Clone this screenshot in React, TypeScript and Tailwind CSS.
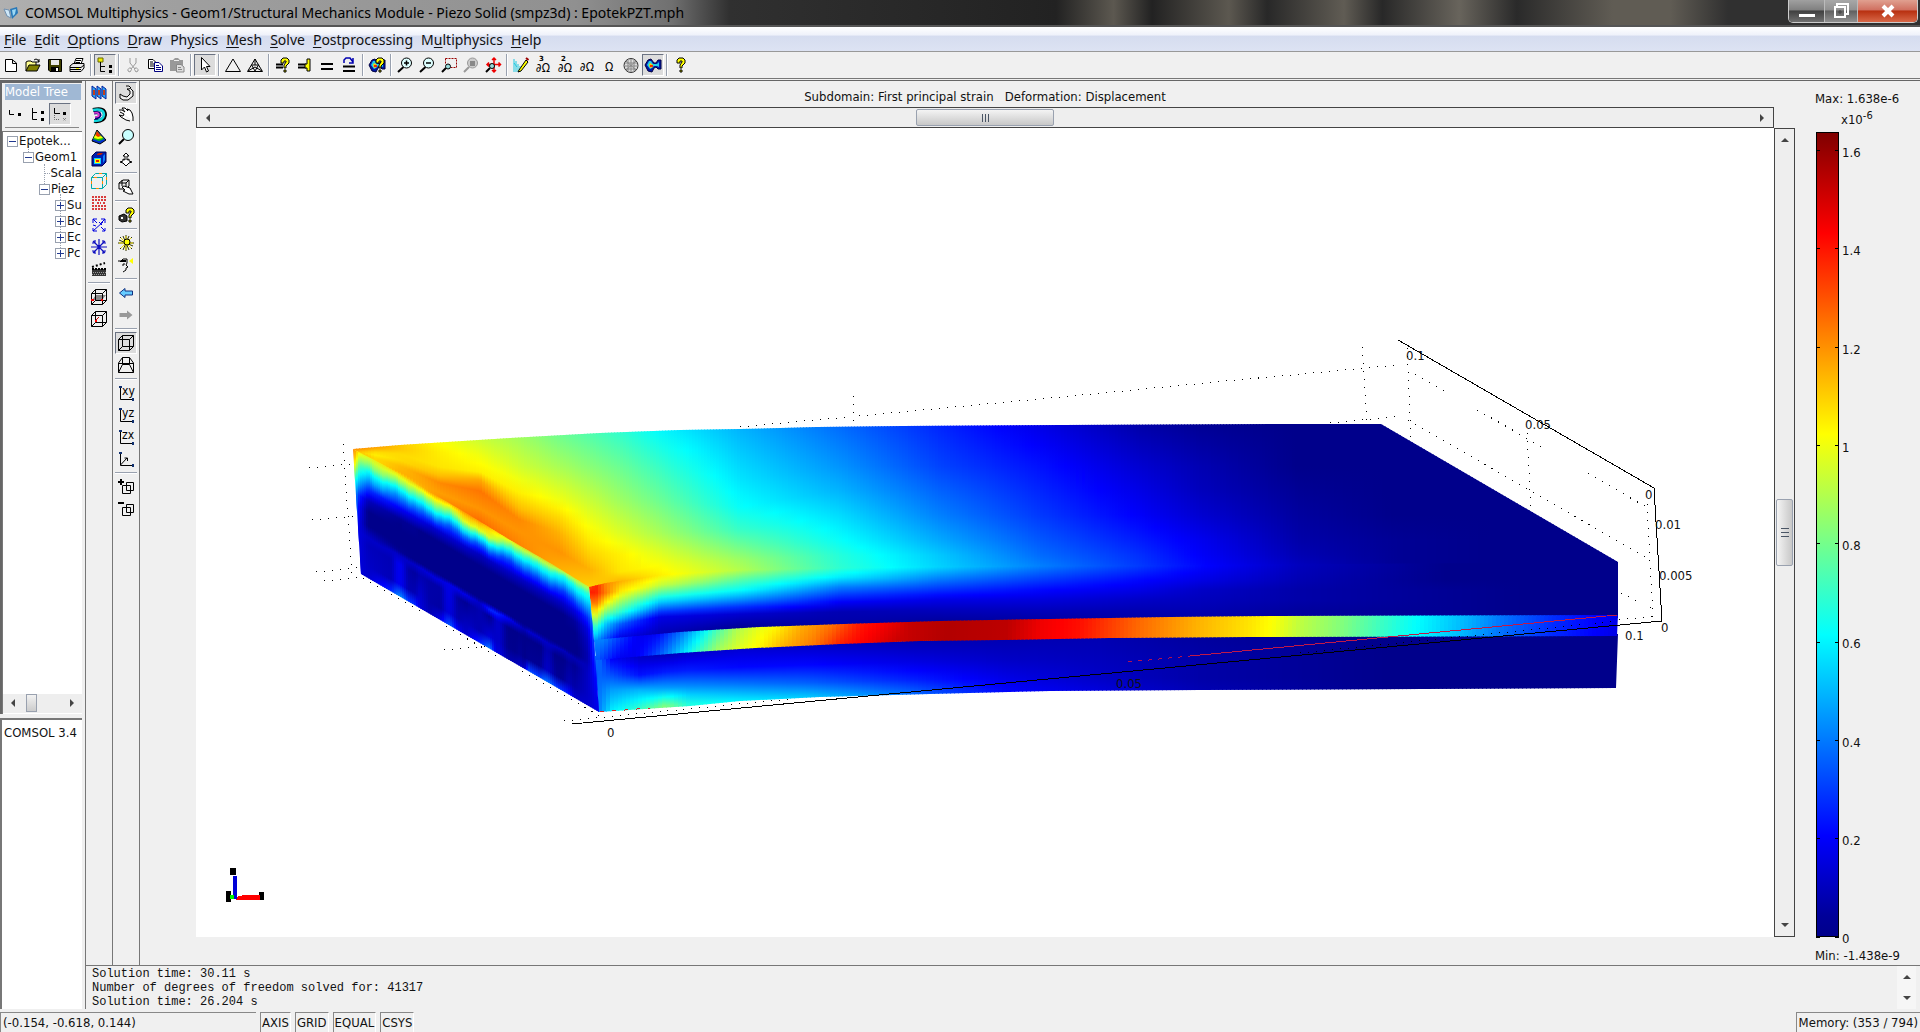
import React from 'react';

type Stop = [number, number];
type Column = { x: number; stops: Stop[] };

const clamp = (v: number) => Math.max(0, Math.min(1, v));

// jet colour map, t in 0..1
const jet = (t: number) => {
    const v = clamp(t);
    const ch = (c: number) => Math.round(255 * clamp(1.5 - Math.abs(4 * v - c)));
    return `rgb(${ch(3)},${ch(2)},${Math.max(ch(1), v < 0.1 ? 139 : 0)})`;
};

const lerp = (a: number, b: number, k: number) => a + (b - a) * k;

const sample = (points: Stop[], x: number) => {
    if (x <= points[0][0]) return points[0][1];
    for (let i = 1; i < points.length; i++) {
        if (x <= points[i][0]) return lerp(points[i - 1][1], points[i][1], (x - points[i - 1][0]) / (points[i][0] - points[i - 1][0]));
    }
    return points[points.length - 1][1];
};

const topFace: Column[] = [
    { x: 353, stops: [[448, .74], [449, .74], [450, .72], [451, .7], [452, .7], [453, .68], [454, .66]] },
    { x: 375, stops: [[446, .73], [449, .7], [452, .66], [455, .64], [458, .66], [461, .66], [464, .6]] },
    { x: 400, stops: [[444, .68], [449, .68], [454, .66], [460, .66], [466, .69], [472, .7], [478, .62]] },
    { x: 440, stops: [[441, .62], [452, .64], [467, .65], [476, .69], [483, .74], [493, .72], [501, .74]] },
    { x: 480, stops: [[438, .57], [455, .61], [472, .64], [480, .71], [491, .76], [509, .73], [525, .78]] },
    { x: 520, stops: [[435, .53], [467, .58], [493, .64], [509, .69], [520, .74], [532, .73], [549, .75]] },
    { x: 560, stops: [[433, .48], [467, .54], [500, .61], [517, .66], [533, .7], [552, .73], [571, .7]] },
    { x: 590, stops: [[431, .45], [467, .51], [500, .57], [527, .62], [550, .66], [570, .7], [588, .67]] },
    { x: 620, stops: [[430, .42], [467, .48], [500, .53], [533, .59], [555, .64], [572, .65], [582, .7]] },
    { x: 660, stops: [[429, .37], [467, .43], [500, .48], [533, .54], [552, .59], [565, .62], [575, .64]] },
    { x: 740, stops: [[428, .3], [480, .35], [507, .38], [530, .43], [545, .48], [560, .53], [570, .55]] },
    { x: 840, stops: [[426, .23], [466, .27], [490, .3], [515, .34], [540, .38], [555, .41], [568, .42]] },
    { x: 940, stops: [[425, .16], [466, .19], [490, .22], [515, .25], [540, .29], [555, .32], [567, .33]] },
    { x: 1040, stops: [[424, .1], [466, .14], [490, .16], [515, .18], [540, .21], [555, .23], [566, .25]] },
    { x: 1140, stops: [[424, .04], [466, .08], [490, .1], [515, .12], [540, .15], [555, .17], [566, .18]] },
    { x: 1200, stops: [[424, .02], [466, .05], [490, .06], [515, .08], [540, .11], [555, .12], [566, .13]] },
    { x: 1300, stops: [[424, .01], [466, .01], [490, .02], [515, .03], [540, .04], [555, .05], [565, .06]] },
    { x: 1400, stops: [[424, 0], [466, 0], [490, .01], [515, .01], [540, .02], [555, .02], [565, .02]] },
    { x: 1618, stops: [[424, 0], [466, 0], [490, 0], [515, 0], [540, 0], [555, 0], [563, 0]] },
];

const upperFront: Column[] = [
    { x: 589, stops: [[586, .8], [592, .85], [600, .78], [612, .62], [624, .45], [640, .3]] },
    { x: 596, stops: [[586, .84], [593, .84], [604, .75], [616, .58], [627, .42], [640, .27]] },
    { x: 606, stops: [[583, .74], [593, .75], [602, .64], [612, .5], [624, .32], [639, .2]] },
    { x: 620, stops: [[582, .7], [591, .65], [601, .54], [612, .42], [624, .22], [638, .1]] },
    { x: 660, stops: [[575, .64], [585, .57], [597, .4], [607, .25], [617, .1], [635, .05]] },
    { x: 740, stops: [[570, .55], [580, .46], [590, .38], [600, .26], [614, .08], [628, .02]] },
    { x: 840, stops: [[568, .42], [577, .36], [587, .25], [602, .12], [612, .05], [624, .04]] },
    { x: 940, stops: [[567, .33], [580, .24], [590, .17], [600, .1], [610, .06], [621, .03]] },
    { x: 1040, stops: [[566, .25], [580, .18], [590, .13], [600, .09], [610, .06], [619, .04]] },
    { x: 1140, stops: [[566, .18], [580, .13], [590, .1], [600, .07], [610, .05], [618, .04]] },
    { x: 1200, stops: [[566, .13], [580, .1], [590, .07], [600, .06], [610, .05], [617, .04]] },
    { x: 1300, stops: [[565, .06], [580, .05], [590, .04], [600, .04], [610, .03], [616, .03]] },
    { x: 1450, stops: [[564, .01], [580, .01], [590, .02], [600, .02], [610, .02], [616, .02]] },
    { x: 1619, stops: [[562, 0], [580, 0], [590, 0], [600, 0], [610, 0], [615, 0]] },
];

const lowerFront: Column[] = [
    { x: 590, stops: [[659, .24], [675, .2], [690, .16], [712, .12]] },
    { x: 600, stops: [[659, .22], [675, .22], [690, .24], [712, .26]] },
    { x: 612, stops: [[659, .12], [675, .2], [690, .28], [711, .36]] },
    { x: 640, stops: [[657, .07], [675, .14], [690, .3], [709, .43]] },
    { x: 665, stops: [[655, .06], [672, .15], [688, .28], [706, .5]] },
    { x: 690, stops: [[652, .07], [670, .15], [686, .26], [704, .4]] },
    { x: 740, stops: [[648, .08], [667, .13], [684, .24], [702, .37]] },
    { x: 806, stops: [[645, .07], [665, .13], [683, .22], [698, .33]] },
    { x: 906, stops: [[641, .05], [662, .1], [680, .16], [695, .24]] },
    { x: 1006, stops: [[640, .05], [660, .07], [678, .1], [693, .13]] },
    { x: 1100, stops: [[638, .05], [660, .06], [678, .07], [691, .09]] },
    { x: 1200, stops: [[637, .03], [660, .04], [678, .04], [690, .05]] },
    { x: 1400, stops: [[637, .01], [660, .01], [678, .01], [689, .01]] },
    { x: 1618, stops: [[636, 0], [660, 0], [678, 0], [688, 0]] },
];

const bandTop: Stop[] = [[594, 640], [650, 634], [680, 632], [760, 627], [844, 624], [940, 621], [1050, 619], [1170, 617], [1280, 616], [1618, 615]];
const bandBottom: Stop[] = [[594, 660], [680, 653], [755, 648], [840, 644], [920, 641], [1000, 640], [1110, 638], [1250, 637], [1618, 636]];
const bandValue: Stop[] = [
    [594, .26], [612, .18], [628, .11], [646, .11], [670, .22], [693, .35], [704, .42], [727, .54], [750, .6], [767, .63], [790, .7],
    [823, .76], [850, .85], [873, .88], [907, .93], [947, .95], [1007, .94], [1040, .89], [1080, .86], [1107, .82], [1140, .77],
    [1197, .7], [1250, .65], [1273, .62], [1300, .56], [1343, .5], [1383, .43], [1413, .38], [1467, .3], [1500, .24], [1550, .17], [1600, .12], [1618, .1],
];
const band: Column[] = Array.from({ length: 172 }, (_, i) => {
    const x = 592 + i * 6;
    const shift = x < 900 ? 9 : 2;
    return { x, stops: [[sample(bandTop, x) - 1, sample(bandValue, x - shift)], [sample(bandBottom, x) + 1, sample(bandValue, x + shift)]] as Stop[] };
});

// depth profile of the left face, measured down from its upper edge
const sideProfile: { x: number; values: number[] }[] = [
    { x: 353, values: [.76, .74, .68, .55, .42, .36, .32, .3, .26, .22, .2, .2, .2] },
    { x: 359, values: [.68, .55, .46, .38, .28, .16, .12, .1, .09, .09, .09, .09, .09] },
    { x: 368, values: [.64, .5, .38, .29, .17, .06, .01, .01, .05, .07, .06, .07, .08] },
    { x: 400, values: [.68, .52, .38, .26, .12, .02, 0, 0, .02, .07, .05, .05, .3] },
    { x: 415, values: [.7, .5, .37, .24, .1, .02, 0, 0, .01, .07, .03, .05, .26] },
    { x: 420, values: [.72, .5, .37, .24, .1, .01, 0, 0, .01, .08, .05, .08, .1] },
    { x: 430, values: [.76, .5, .37, .22, .08, .01, 0, 0, .01, .09, .04, .04, .06] },
    { x: 450, values: [.74, .52, .37, .22, .08, .01, 0, 0, 0, .1, .04, .03, .24] },
    { x: 466, values: [.76, .6, .42, .24, .08, .01, 0, 0, 0, .1, .02, .06, .08] },
    { x: 480, values: [.76, .6, .38, .2, .06, .01, 0, 0, 0, .07, .05, .05, .24] },
    { x: 490, values: [.72, .58, .38, .22, .07, .01, 0, 0, 0, .16, .02, .09, .36] },
    { x: 496, values: [.7, .55, .36, .2, .07, .01, 0, 0, 0, .16, .02, .02, .05] },
    { x: 525, values: [.7, .42, .3, .18, .07, .01, 0, 0, 0, .05, 0, .01, .1] },
    { x: 528, values: [.7, .42, .3, .18, .07, .01, 0, 0, 0, .08, 0, .02, .34] },
    { x: 562, values: [.7, .4, .3, .18, .07, .01, 0, 0, 0, .06, 0, .02, .3] },
    { x: 575, values: [.68, .4, .31, .2, .1, .03, .01, 0, 0, .05, .02, .04, .1] },
    { x: 588, values: [.68, .42, .35, .27, .17, .1, .07, .05, .05, .06, .07, .07, .08] },
    { x: 600, values: [.6, .45, .42, .38, .36, .34, .3, .26, .22, .2, .16, .12, .1] },
];
const sideDepth = [-4, 7, 14, 22, 32, 43, 54, 68, 75, 80, 88, 108, 128];
const sideFace: Column[] = Array.from({ length: 125 }, (_, i) => {
    const x = 352 + i * 2;
    const edge = 449 + (x - 353) * 0.583;
    const ragged = Math.sin(x * 0.17) * Math.sin(x * 0.053) + Math.sin(x * 0.71) * 0.3;
    const streak = Math.max(0, Math.sin(x * 0.19 + 1) * Math.sin(x * 0.067));
    return {
        x,
        stops: sideDepth.map((depth, row) => {
            const base = sample(sideProfile.map((p) => [p.x, p.values[row]] as Stop), x);
            const jitter = row > 0 && row < 4 ? ragged * 2 : row === 9 ? ragged : 0;
            const extra = row > 9 && x < 580 ? streak * 0.06 : 0;
            return [edge + depth + jitter, base + extra] as Stop;
        }),
    };
});

interface FaceProps {
    id: string;
    columns: Column[];
    outline: string;
    step: number;
}

const Face: React.FC<FaceProps> = ({ id, columns, outline, step }) => {
    const strips: { x: number; y1: number; y2: number; stops: Stop[] }[] = [];
    const last = columns[columns.length - 1].x;
    let k = 0;
    for (let x = columns[0].x; x < last; x += step) {
        const mid = x + step / 2;
        while (k < columns.length - 2 && columns[k + 1].x < mid) k++;
        const a = columns[k];
        const b = columns[k + 1];
        const f = clamp((mid - a.x) / (b.x - a.x));
        const rows = a.stops.map((s, i) => [lerp(s[0], b.stops[i][0], f), lerp(s[1], b.stops[i][1], f)] as Stop);
        const y1 = rows[0][0];
        const y2 = rows[rows.length - 1][0];
        const stops: Stop[] = [];
        rows.forEach((r, i) => {
            stops.push([(r[0] - y1) / (y2 - y1), r[1]]);
            const n = rows[i + 1];
            if (n && Math.abs(n[1] - r[1]) > 0.02) stops.push([((r[0] + n[0]) / 2 - y1) / (y2 - y1), (r[1] + n[1]) / 2]);
        });
        strips.push({ x, y1, y2, stops });
    }

    return (
        <g clipPath={`url(#${id}-clip)`}>
            <clipPath id={`${id}-clip`}><polygon points={outline} /></clipPath>
            {strips.map((s, i) => (
                <g key={i}>
                    <linearGradient id={`${id}-${i}`} gradientUnits="userSpaceOnUse" x1={s.x} x2={s.x} y1={s.y1} y2={s.y2}>
                        {s.stops.map((st, j) => <stop key={j} offset={st[0]} stopColor={jet(st[1])} />)}
                    </linearGradient>
                    <rect x={s.x} y={s.y1 - 6} width={step + 1} height={s.y2 - s.y1 + 12} fill={`url(#${id}-${i})`} />
                </g>
            ))}
        </g>
    );
};

const backEdge = '353,449 400,445 510,438 600,433 680,430 740,429 817,427 903,426 1062,425 1280,424 1381,424';

const axisLabels = [
    { x: 1406, y: 360, text: '0.1' },
    { x: 1525, y: 429, text: '0.05' },
    { x: 1645, y: 499, text: '0' },
    { x: 1655, y: 529, text: '0.01' },
    { x: 1659, y: 580, text: '0.005' },
    { x: 1661, y: 632, text: '0' },
    { x: 1625, y: 640, text: '0.1' },
    { x: 1116, y: 688, text: '0.05' },
    { x: 607, y: 737, text: '0' },
];

const SurfacePlot: React.FC = () => (
    <svg viewBox="196 128 1578 809" className="block w-full h-full bg-white" role="img" aria-label="First principal strain">
        <g stroke="#000" strokeWidth="1" strokeDasharray="1 7" fill="none" shapeRendering="crispEdges">
            <path d="M740 427L1030 400L1205 383L1398 365" />
            <path d="M853 396L854 424" />
            <path d="M1362 347L1367 420" />
            <path d="M1407 348L1411 440" />
            <path d="M1415 374L1648 508" />
            <path d="M1330 423L1402 416L1418 426L1650 560" />
            <path d="M1527 433L1531 510" />
            <path d="M1647 504L1653 617" />
            <path d="M1621 593L1653 609" />
            <path d="M1619 620L1653 616" />
            <path d="M343 444L352 574" />
            <path d="M309 468L350 464" />
            <path d="M312 520L356 516" />
            <path d="M316 572L360 567" />
            <path d="M324 581L361 577L600 716" />
            <path d="M444 650L490 646" />
            <path d="M564 721L790 699" />
        </g>
        <Face id="top" columns={topFace} step={3} outline={`${backEdge} 1618,562 1618,567 1040,567 740,571 660,576 620,583 590,588`} />
        <Face id="front" columns={upperFront} step={3} outline="589,587 606,583 620,581 660,575 740,570 840,567 1040,566 1618,562 1618,618 1050,621 760,629 594,642" />
        <Face id="lower" columns={lowerFront} step={4} outline="594,656 755,646 1000,638 1618,634 1616,688 1200,690 1050,691 930,694 820,697 740,701 690,706 599,712" />
        <Face id="band" columns={band} step={4} outline="594,640 680,632 760,627 844,624 940,621 1050,619 1170,617 1280,616 1618,615 1617,636 1250,637 1110,638 1000,640 920,641 840,644 755,648 680,653 596,660" />
        <Face id="side" columns={sideFace} step={2} outline="353,449 380,463 420,486 466,513 510,540 550,563 589,587 594,640 599,712 361,574" />
        <g fill="none" shapeRendering="crispEdges">
            <path d="M1398 340L1654 488L1662 621L572 724" stroke="#000" />
            <path d="M1128 662L1190 656" stroke="#b01050" strokeDasharray="4 6" />
            <path d="M1190 656L1617 615" stroke="#c01848" />
            <path d="M1300 653L1617 621" stroke="#000" strokeDasharray="1 7" />
            <path d="M600 712L650 708" stroke="#e02020" strokeDasharray="4 8" />
        </g>
        <g fontSize="13" fill="#111" className="font-['DejaVu_Sans_Condensed','DejaVu_Sans',sans-serif]">
            {axisLabels.map((l, i) => <text key={i} x={l.x} y={l.y}>{l.text}</text>)}
        </g>
        <g shapeRendering="crispEdges">
            <rect x="226" y="891" width="5" height="11" fill="#000" />
            <rect x="230" y="868" width="6" height="7" fill="#000" />
            <rect x="259" y="892" width="5" height="8" fill="#000" />
            <path d="M236 897L244 895H260V900H236Z" fill="#f00" />
            <rect x="233" y="876" width="4" height="23" fill="#0000d8" />
            <rect x="230" y="895" width="4" height="4" fill="#00f000" />
        </g>
    </svg>
);

const magnifier = (
    <>
        <path d="M6.500 10L1 15" stroke="#000" strokeWidth="2" />
        <circle cx="9.500" cy="6" r="5" fill="#dff" stroke="#000" />
    </>
);
const cube = <path d="M.5 4.500H11.500V15.500H.5ZM4.500 .5H15.500V11.500H4.500ZM.5 4.500L4.500 .5M11.500 4.500L15.500 .5M.5 15.500L4.500 11.500M11.500 15.500L15.500 11.500" stroke="#000" fill="none" />;
const colourBlob = (
    <>
        <path d="M0 8L3 3L6 2L9 6L11 6L13 3H16V12H13L11 10L9 11L7 15L3 14Z" fill="#0018a8" stroke="#000040" />
        <path d="M2 8L4 4L6 4L8 7H12L14 5V10L12 9H9L7 11L5 12Z" fill="#20d0e8" />
        <path d="M4 8L5 6L8 8L8 10L5 11Z" fill="#ffd000" />
        <path d="M5 8H8V10H5Z" fill="#f03000" />
    </>
);
const question = (x: number) => (
    <g transform={`translate(${x} 0)`}>
        <path d="M1 5V3L3 1H7L9 3V6L6 9V11H4V8L6 5V4H4V6H1Z" fill="#ff0" stroke="#000" />
        <path d="M4 13H6V15H4Z" fill="#ff0" stroke="#000" />
    </g>
);
const axes = (label: string) => (
    <>
        <path d="M2.500 1V14.500H16" stroke="#000" fill="none" />
        <path d="M1 1H4V3H1ZM14 13H16V16H14Z" fill="#103070" />
        {label && <text x="4" y="10" fontSize="12" className="font-['DejaVu_Sans_Condensed','DejaVu_Sans',sans-serif]">{label}</text>}
    </>
);
const omega = (label: string, sup?: string) => (
    <>
        <text x="8" y={sup ? 15 : 14} textAnchor="middle" fontSize="12" className="font-['DejaVu_Sans_Condensed','DejaVu_Sans',sans-serif]">{label}</text>
        {sup && <text x="4" y="4" fontSize="7" fontWeight="bold" className="font-['DejaVu_Sans',sans-serif]">{sup}</text>}
    </>
);

const icons: Record<string, React.ReactNode> = {
    new: <path d="M2.500 2.500H9L13.500 6V14.500H2.500ZM9.500 2.500V6.500H13.500" fill="#fff" stroke="#000" />,
    open: (
        <>
            <path d="M1 14V5L3 4H6L7 5H11V8" fill="#ffff90" stroke="#000" />
            <path d="M1 14L4 8H15L12 14Z" fill="#808000" stroke="#000" />
            <path d="M9 3L11 2L13 3L14 5M14 2V5H11" stroke="#000" fill="none" />
        </>
    ),
    save: (
        <>
            <path d="M1.500 2.500H14.500V14.500H3L1.500 13Z" fill="#404000" stroke="#000" />
            <path d="M4 3H12V8H4Z" fill="#e8e8e8" />
            <path d="M4 10H12V14H4Z" fill="#000" />
            <path d="M9 11H11V14H9Z" fill="#fff" />
        </>
    ),
    print: (
        <>
            <path d="M5 7L7 1.500H14L12 7Z" fill="#fff" stroke="#000" />
            <path d="M7 3.500H12M6.500 5.500H11" stroke="#000" />
            <path d="M1 9L4 6.500H15V11L12 14.500H1Z" fill="#e8e8e8" stroke="#000" />
            <path d="M1 10.500H12L15 8M1 12.500H12" stroke="#000" fill="none" />
            <path d="M7 11H10V12H7Z" fill="#ff0" />
        </>
    ),
    tree: (
        <>
            <path d="M1 1H6V5H1Z" fill="#ee0" stroke="#660" />
            <path d="M3.500 5V14.500H8M3.500 9.500H8" stroke="#000" fill="none" />
            <path d="M12 8H15V11H12ZM12 13H15V16H12Z" />
        </>
    ),
    cut: <path d="M5 1V6L10 12M11 1V6L6 12M3 12.500L5 10.500L6.500 12.500L5 15L3 14ZM13 12.500L11 10.500L9.500 12.500L11 15L13 14Z" stroke="#999" fill="none" />,
    copy: (
        <>
            <path d="M1.500 2.500H6L8.500 5V11.500H1.500Z" fill="#fff" stroke="#000" />
            <path d="M3 5H6M3 7H7M3 9H7" stroke="#000" />
            <path d="M7.500 5.500H12L15.500 9V14.500H7.500Z" fill="#fff" stroke="#000080" />
            <path d="M9 8.500H12M9 10.500H14M9 12.500H14" stroke="#000080" />
        </>
    ),
    paste: (
        <>
            <path d="M1 3H4L6 1H9L11 3H14V14H1Z" fill="#999" />
            <path d="M5 3.500H10" stroke="#eee" />
            <path d="M7.500 7.500H12L15 10V15H7.500Z" fill="#ddd" stroke="#888" />
            <path d="M9 10.500H12M9 12.500H13" stroke="#888" />
        </>
    ),
    cursor: <path d="M4.500 .5V13L7.500 10L9.500 15L11.500 14L9.500 9.500H13Z" fill="#fff" stroke="#000" />,
    triangle: <path d="M8 2L15.500 14.500H.5Z" fill="none" stroke="#000" />,
    mesh: <path d="M8 2L15.500 14.500H.5ZM4.500 8H11.500L8 14ZM8 2V8M1 14L8 10L15 14" fill="none" stroke="#000" />,
    solveQuestion: <><path d="M1 7.500H8M1 10.500H8" stroke="#000" strokeWidth="2" />{question(5)}</>,
    solveRestart: <><path d="M1 7.500H9M1 10.500H9" stroke="#000" strokeWidth="2" /><path d="M10 2H13V14H10V11H8V7H10Z" fill="#ff0" stroke="#000" /></>,
    equal: <path d="M2 7H14M2 12H14" stroke="#000" strokeWidth="2" />,
    refresh: <><path d="M2 9.500H14M2 14H14" stroke="#000" strokeWidth="2" /><path d="M3 6V3L5 1H9L12 5M12 1V6H8" stroke="#0000b0" fill="none" strokeWidth="1.500" /></>,
    plotQuestion: <>{colourBlob}{question(6)}</>,
    zoomIn: <>{magnifier}<path d="M7 6H12M9.500 3.500V8.500" stroke="#000" strokeWidth="1.500" /></>,
    zoomOut: <>{magnifier}<path d="M7 6H12" stroke="#000" strokeWidth="1.500" /></>,
    zoomWindow: <><path d="M4.500 1.500H15.500V10.500H9M4.500 1.500V7" fill="none" stroke="#900" strokeDasharray="2 1" /><path d="M5 11L1 15" stroke="#000" strokeWidth="2" /><circle cx="7" cy="9.500" r="2.500" fill="#9dd" stroke="#000" /></>,
    zoomLast: <><path d="M6 10L1 15" stroke="#999" strokeWidth="2" /><circle cx="9.500" cy="6" r="5" fill="#ccc" stroke="#999" /><path d="M7 4H12V9H7Z" fill="#888" /></>,
    zoomExtents: <><path d="M9 1V15M2 7.500H15.500M7 3L9 1L11 3M7 13L9 15L11 13M13.500 5.500L15.500 7.500L13.500 9.500M4 5.500L2 7.500L4 9.500" stroke="#e00" fill="none" strokeWidth="1.500" /><path d="M5 11L1 15" stroke="#000" strokeWidth="2" /><circle cx="7" cy="9" r="2.500" fill="#9dd" stroke="#000" /></>,
    brush: <><path d="M1 2V15M3 4V15M5 7V15M7 9V15M1 6L4 10" stroke="#20c8e0" /><path d="M6 13L13 3L15 5L8 14L5 15Z" fill="#ff0" stroke="#000" /><path d="M13 1L15.500 3" stroke="#900" strokeWidth="2" /></>,
    omega3: omega('∂Ω', '3'),
    omega2: omega('∂Ω', '2'),
    omega1: omega('∂Ω'),
    omega: omega('Ω'),
    sphere: <><circle cx="8" cy="8.500" r="7" fill="#ddd" stroke="#333" /><path d="M2 6H14M2 9H15M3 12H13M5 3V14M8 2V15M11 3V14M3 4L13 13M13 4L3 13" stroke="#888" /></>,
    plot: colourBlob,
    help: question(3),
    slice: <><path d="M1 1L5 4V14L1 11ZM6 1L10 4V14L6 11ZM11 1L15 4V14L11 11Z" fill="#30a0f0" stroke="#0020a0" /><path d="M2 5H4V10H2ZM7 5H9V10H7ZM12 5H14V10H12Z" fill="#c04020" /></>,
    iso: <><path d="M2 3Q14 0 14 8Q13 15 3 14" fill="none" stroke="#000" strokeWidth="4" /><path d="M2 3Q13 1 13 8Q12 14 3 14" fill="none" stroke="#10d8e0" strokeWidth="2.500" /><path d="M3 6Q9 5 9 8Q8 11 4 11" fill="none" stroke="#000080" strokeWidth="3" /><path d="M3 6Q8 5 8 8Q8 10 4 10" fill="none" stroke="#f040d0" strokeWidth="1.500" /></>,
    pyramid: <><path d="M1 12L6 1L15 11L9 15Z" fill="#0030d0" stroke="#000" /><path d="M2 10L6 2L13 10L8 12Z" fill="#10c010" /><path d="M4 7L6 2L10 7L7 8Z" fill="#f03000" /><path d="M3 9L4 6L7 8L10 7L12 9L7 10Z" fill="#ff0" /></>,
    box: <><path d="M1 5L5 1H15V11L11 15H1Z" fill="#0020b0" stroke="#000050" /><path d="M3 7H10V13H3Z" fill="#10d0ff" /><path d="M4 8H9V12H4Z" fill="#ff0" /><path d="M5 9H8V11H5Z" fill="#e02000" /><path d="M6 3L8 2H12L10 4H6Z" fill="#c02000" /><path d="M12 5L14 3V9L12 12Z" fill="#1080ff" /></>,
    edgeBox: <><path d="M.5 4.500H11.500V15.500H.5ZM4.500 .5H15.500V11.500M4.500 .5L.5 4.500M11.500 4.500L15.500 .5M11.500 15.500L15.500 11.500" fill="none" stroke="#0aa" /><path d="M3 4.500H6M8 .5H11M11.500 8V11M.5 8V11M5 15.500H8M15.500 4V7" stroke="#f80" /></>,
    points: <path d="M1 2H15M1 14H15M1 5H15M1 11H15M1 8H4M12 8H15M6 8H10" stroke="#d00000" strokeWidth="1.500" strokeDasharray="2 1" />,
    arrows: <path d="M2 6V2H6M2 2L6 6M10 2H14V6M14 2L10 6M2 11V14H6M2 14L12 5M11 14H14V11M14 14L10 10M5 9L2 8M8 5L11 8" stroke="#0000e0" fill="none" />,
    star: <path d="M8 0V16M0 8H16M2 2L14 14M14 2L2 14M4 1V4H1M12 1V4H15M4 15V12H1M12 15V12H15" stroke="#1010c0" fill="none" strokeWidth="1.200" />,
    film: <><path d="M1 8H15V15H1Z" fill="#333" /><path d="M1 6L14 2" stroke="#000" strokeWidth="2" strokeDasharray="2 2" /><path d="M1 8H15" stroke="#000" strokeWidth="2" strokeDasharray="2 1" /><path d="M2 11.500H15M1 13.500H14" stroke="#999" strokeDasharray="1 1" /></>,
    cubeSlice: <><path d="M1 11L5 6H15L11 11Z" fill="#888" />{cube}<path d="M0 11H3M10 11H12" stroke="#e00" strokeWidth="2" /></>,
    cubePoint: <>{cube}<path d="M4 10L8 6" stroke="#c00" /><path d="M4 9H6V11H4Z" fill="#f00" /></>,
    orbit: <path d="M8 1H11L13 3L11 4H9L12 6V9L9 12L5 11L2 9V13L5 15H10L15 11V6L13 4" fill="#eee" stroke="#000" />,
    pan: <path d="M1 3L4 3L7 5L4 1L7 1L10 4L9 2L12 3L14 6L15 10V14M12 14L8 13L3 10L1 8L5 9L6 7L2 5" fill="#fff" stroke="#000" />,
    lens: <><path d="M6 10L1 15" stroke="#000" strokeWidth="2" /><circle cx="10" cy="6" r="5.500" fill="#c8ffff" stroke="#000" /></>,
    dolly: <path d="M8 2L11 5H9V9L11 8V10L14 11L11 12L8 15L5 12L2 11L5 10V8L7 9V5H5Z" fill="#fff" stroke="#000" />,
    moveScene: <><path d="M1 4L5 1H11V7L8 10H1ZM1 4H8V10M8 4L11 1M4 1V7" fill="none" stroke="#000" /><path d="M6 7L12 9L15 15H11L5 12L7 11L4 8Z" fill="#fff" stroke="#000" /></>,
    camera: <><path d="M1 9L6 7L9 9V14L4 15L1 13Z" fill="#333" stroke="#000" /><path d="M3 10H5V12H3Z" fill="#fff" />{question(7)}</>,
    light: <><path d="M8 0V16M0 8H16M2 2L14 14M14 2L2 14M5 1L11 15M11 1L5 15M1 5L15 11" stroke="#333300" /><path d="M8 1V15M1 8H15M3 3L13 13M13 3L3 13" stroke="#f0e000" /><circle cx="9" cy="7" r="3" fill="#ff0" stroke="#000" /></>,
    headlight: <><path d="M2 5L5 2H9V6L8 8L10 10L8 11V13L5 15M0 4H8M4 8H6M6 6V8" stroke="#000" fill="none" /><path d="M3 3H8V5H3Z" /><path d="M11 4L15 1V7Z" fill="#ff0" /></>,
    undo: <path d="M1.500 8L7 3.500V6H14.500V10H7V12.500Z" fill="#6cf" stroke="#103080" />,
    redo: <path d="M14.500 8L9 3.500V6H1.500V10H9V12.500Z" fill="#999" />,
    ortho: cube,
    perspective: <path d="M4.500 .5H11.500V7.500H4.500ZM4.500 .5L.5 6V15.500H15.500V6L11.500 .5M.5 15.500L4.500 7.500M15.500 15.500L11.500 7.500M.5 6.500H15" stroke="#000" fill="none" />,
    xy: axes('xy'),
    yz: axes('yz'),
    zx: axes('zx'),
    view3d: <>{axes('')}<path d="M2.500 14L9 7M6.500 7H9.500V10" stroke="#000" fill="none" /></>,
    add: <><path d="M4.500 6.500H12.500V14.500H4.500ZM8.500 3.500H15.500V11.500H8.500Z" stroke="#000" fill="none" /><path d="M0 3H6M3 0V6" stroke="#000" strokeWidth="2" /></>,
    remove: <><path d="M4.500 6.500H12.500V14.500H4.500ZM8.500 3.500H15.500V11.500H8.500Z" stroke="#000" fill="none" /><path d="M0 2H6" stroke="#000" strokeWidth="2" /></>,
    tree1: <><path d="M1.500 4V8.500H6" stroke="#000" fill="none" /><path d="M10 7H13V10H10Z" /></>,
    tree2: <><path d="M2.500 2V13.500H7M2.500 6.500H7" stroke="#000" fill="none" /><path d="M11 5H14V8H11ZM11 12H14V15H11Z" /></>,
    tree3: <><path d="M2.500 2V7.500H8" stroke="#000" fill="none" /><path d="M11 6H14V9H11Z" /><path d="M2.500 9V13.500H8M11 12L14 15M14 12L11 15" stroke="#666" fill="none" strokeDasharray="1 1" /></>,
};

interface ToolButtonProps {
    name: string;
    pressed?: boolean;
}

const ToolButton: React.FC<ToolButtonProps> = ({ name, pressed }) => (
    <button
        type="button"
        aria-label={name}
        className={pressed
            ? 'flex h-[22px] w-[22px] shrink-0 items-center justify-center border border-t-gray-500 border-l-gray-500 border-r-white border-b-white bg-[#dcdcdc]'
            : 'flex h-[22px] w-[22px] shrink-0 items-center justify-center'}
    >
        <svg viewBox="0 0 16 16" className="h-4 w-4 overflow-visible">{icons[name]}</svg>
    </button>
);

const toolbar = [
    'new', 'open', 'save', 'print', '|', '*tree', '|', 'cut', 'copy', 'paste', '|', '*cursor', '|', 'triangle', 'mesh', '|',
    'solveQuestion', 'solveRestart', 'equal', 'refresh', '|', 'plotQuestion', '|', 'zoomIn', 'zoomOut', 'zoomWindow', 'zoomLast', 'zoomExtents', '|',
    'brush', 'omega3', 'omega2', 'omega1', 'omega', 'sphere', '*plot', '|', 'help',
];
const plotTools = ['slice', 'iso', 'pyramid', 'box', 'edgeBox', 'points', 'arrows', 'star', 'film', '|', 'cubeSlice', 'cubePoint'];
const cameraTools = [
    '*orbit', 'pan', 'lens', 'dolly', '|', 'moveScene', '|', 'camera', '|', 'light', 'headlight', '|', 'undo', 'redo', '|',
    '*ortho', 'perspective', '|', 'xy', 'yz', 'zx', 'view3d', '|', 'add', 'remove',
];

const VerticalTools: React.FC<{ items: string[] }> = ({ items }) => (
    <div className="flex w-[27px] shrink-0 flex-col items-center border-l border-l-[#777] pt-px">
        {items.map((item, i) => item === '|'
            ? <div key={i} className="my-[2px] h-[2px] w-[22px] shrink-0 border-t border-b border-t-gray-400 border-b-white" />
            : <ToolButton key={i} name={item.replace('*', '')} pressed={item.startsWith('*')} />)}
    </div>
);

const menus = [
    ['', 'F', 'ile'], ['', 'E', 'dit'], ['', 'O', 'ptions'], ['', 'D', 'raw'], ['Ph', 'y', 'sics'],
    ['', 'M', 'esh'], ['', 'S', 'olve'], ['', 'P', 'ostprocessing'], ['M', 'u', 'ltiphysics'], ['', 'H', 'elp'],
];

const treeRows = [
    { pad: 'pl-[4px]', sign: '−', label: 'Epotek...' },
    { pad: 'pl-[20px]', sign: '−', label: 'Geom1' },
    { pad: 'pl-[42px]', sign: '', label: 'Scala' },
    { pad: 'pl-[36px]', sign: '−', label: 'Piez' },
    { pad: 'pl-[52px]', sign: '+', label: 'Su' },
    { pad: 'pl-[52px]', sign: '+', label: 'Bc' },
    { pad: 'pl-[52px]', sign: '+', label: 'Ec' },
    { pad: 'pl-[52px]', sign: '+', label: 'Pc' },
];

const Arrow: React.FC<{ dir: 'left' | 'right' | 'up' | 'down' }> = ({ dir }) => {
    const paths = { left: 'M6 0V8L2 4Z', right: 'M2 0V8L6 4Z', up: 'M0 6H8L4 2Z', down: 'M0 2H8L4 6Z' };
    return <svg viewBox="0 0 8 8" className="h-2 w-2 shrink-0" fill="#444"><path d={paths[dir]} /></svg>;
};

const ModelTree: React.FC = () => (
    <aside className="flex w-[85px] shrink-0 flex-col pr-[3px]">
        <div className="flex min-h-0 flex-[637] flex-col border-t-2 border-l-2 border-[#666]">
            <h2 className="mt-px ml-[3px] mr-px h-4 overflow-hidden bg-[#a0b8d4] text-[13px] leading-4 whitespace-nowrap text-white">Model Tree</h2>
            <div className="mx-[3px] mt-[3px] flex h-[25px] border-b border-[#888]">
                <ToolButton name="tree1" />
                <ToolButton name="tree2" />
                <ToolButton name="tree3" pressed />
            </div>
            <div className="mt-[3px] flex min-h-0 flex-1 flex-col overflow-hidden border-t border-l border-[#777] bg-white">
                <ul className="relative pt-px">
                    <li aria-hidden="true" className="absolute top-[14px] left-[25px] h-[8px] border-l border-dotted border-gray-400" />
                    <li aria-hidden="true" className="absolute top-[32px] left-[41px] h-[20px] border-l border-dotted border-gray-400" />
                    <li aria-hidden="true" className="absolute top-[62px] left-[57px] h-[56px] border-l border-dotted border-gray-400" />
                    {treeRows.map((row) => (
                        <li key={row.label} className={`relative flex h-4 items-center whitespace-nowrap ${row.pad}`}>
                            {row.sign ? (
                                <button type="button" aria-label={`Toggle ${row.label}`} className="mr-px flex h-[11px] w-[11px] shrink-0 items-center justify-center border border-gray-400 bg-white">
                                    <svg viewBox="0 0 7 7" className="h-[7px] w-[7px]" stroke="#223a90"><path d={row.sign === '+' ? 'M0 3.500H7M3.500 0V7' : 'M0 3.500H7'} /></svg>
                                </button>
                            ) : <span className="mr-px w-[5px] border-t border-dotted border-gray-400" />}
                            <span>{row.label}</span>
                        </li>
                    ))}
                </ul>
                <div className="mt-auto mb-px flex h-[19px] shrink-0 items-center bg-[#eee] px-[6px]">
                    <Arrow dir="left" />
                    <div className="ml-[9px] h-[18px] w-[11px] border border-gray-400 bg-linear-to-b from-[#f2f2f2] to-[#ccc]" />
                    <div className="flex-1" />
                    <Arrow dir="right" />
                </div>
            </div>
        </div>
        <div className="mt-1 min-h-0 flex-[289] border-t-2 border-l-2 border-[#777] bg-white pl-[2px] pt-[3px] whitespace-nowrap">COMSOL 3.4</div>
    </aside>
);

const ticks = [1.6, 1.4, 1.2, 1, 0.8, 0.6, 0.4, 0.2, 0];
const MAX_VALUE = 1.638;

const ColourBar: React.FC = () => (
    <div className="relative mt-[4px] flex-1 ml-[21px]">
        <svg viewBox="0 0 23 100" preserveAspectRatio="none" className="h-full w-[23px] border border-black">
            <linearGradient id="jet" x1="0" x2="0" y1="1" y2="0">
                {Array.from({ length: 41 }, (_, i) => <stop key={i} offset={i / 40} stopColor={jet(i / 40)} />)}
            </linearGradient>
            <rect width="23" height="100" fill="url(#jet)" />
        </svg>
        {ticks.map((t) => (
            <div key={t} className="absolute left-0 flex h-0 items-center" style={{ top: `${100 - (t / MAX_VALUE) * 100}%` }}>
                <span className="flex w-[23px] justify-between">
                    <i className="h-px w-1 bg-black" />
                    <i className="h-px w-1 bg-black" />
                </span>
                <span className="ml-[3px] pt-1">{t}</span>
            </div>
        ))}
    </div>
);

const PlotArea: React.FC = () => (
    <main className="flex min-h-0 min-w-0 flex-1 flex-col border-l border-[#777] pl-[56px]">
        <div className="flex min-h-0 flex-1 pb-[28px]">
            <div className="flex min-w-0 flex-1 flex-col">
                <h1 className="h-[26px] pt-[8px] text-center leading-4 whitespace-pre">Subdomain: First principal strain   Deformation: Displacement</h1>
                <div className="flex h-[21px] shrink-0 items-center justify-between border border-[#444] bg-[#eee] px-[7px]">
                    <Arrow dir="left" />
                    <div className="flex h-[17px] w-[138px] items-center justify-center gap-[2px] rounded-[2px] border border-gray-400 bg-linear-to-b from-[#f4f4f4] to-[#c8c8c8]">
                        <i className="h-2 w-px bg-gray-600" /><i className="h-2 w-px bg-gray-600" /><i className="h-2 w-px bg-gray-600" />
                    </div>
                    <Arrow dir="right" />
                </div>
                <div className="min-h-0 flex-1"><SurfacePlot /></div>
            </div>
            <div className="mt-[47px] flex w-[21px] shrink-0 flex-col items-center justify-between border border-[#444] bg-[#eee] py-[7px]">
                <Arrow dir="up" />
                <div className="flex h-[67px] w-[17px] flex-col items-center justify-center gap-[3px] rounded-[2px] border border-gray-400 bg-linear-to-r from-[#f4f4f4] to-[#c8c8c8]">
                    <i className="h-px w-2 bg-gray-600" /><i className="h-px w-2 bg-gray-600" /><i className="h-px w-2 bg-gray-600" />
                </div>
                <Arrow dir="down" />
            </div>
            <div className="relative flex w-[125px] shrink-0 flex-col whitespace-nowrap">
                <div className="mt-[10px] ml-5 h-4 leading-4">Max: 1.638e-6</div>
                <div className="ml-[46px] flex h-[21px] items-end leading-4">x10<span className="mb-[6px] text-[11px] leading-3">-6</span></div>
                <ColourBar />
                <div className="absolute -bottom-[27px] left-5 leading-4">Min: -1.438e-9</div>
            </div>
        </div>
    </main>
);

const App: React.FC = () => (
    <div className="flex h-screen flex-col overflow-hidden bg-[#f0f0f0] font-['DejaVu_Sans_Condensed','DejaVu_Sans',sans-serif] text-[13px] text-[#111]">
        <header className="flex h-[27px] shrink-0 items-center border-b-2 border-[#555] bg-[linear-gradient(90deg,#b0b0b0_0%,#a0a0a0_8%,#909090_30%,#707070_35%,#303030_38%,#222_55%,#5c5850_58%,#222_60%,#5c5850_64%,#282828_66%,#605c54_70%,#282828_72%,#68645c_76%,#2a2a2a_79%,#605c54_84%,#605c54_87%,#303030_90%,#303030_100%)] pl-[3px]">
            <svg viewBox="0 0 16 16" className="h-4 w-4">
                <path d="M1 4L6 5L8 13L4 11Z" fill="#d0e8f8" stroke="#7090b0" />
                <path d="M7 4L14 2L15 8L9 14Z" fill="#2878b8" />
                <path d="M9 5L13 4L12 9L10 11Z" fill="#9cd8f4" />
            </svg>
            <span className="ml-[6px] font-['Noto_Sans',sans-serif] text-[14px] leading-6 whitespace-nowrap text-black">COMSOL Multiphysics - Geom1/Structural Mechanics Module - Piezo Solid (smpz3d) : EpotekPZT.mph</span>
            <div className="mr-[2px] ml-auto flex h-[23px] self-start rounded-b-[5px] border border-t-0 border-[#ccc] overflow-hidden">
                <button type="button" aria-label="Minimize" className="flex w-[36px] items-end justify-center border-r border-[#bbb] bg-[linear-gradient(180deg,#a0a0a0_0%,#808080_45%,#404040_50%,#707070_100%)] pb-[5px]"><i className="h-[3px] w-4 bg-white" /></button>
                <button type="button" aria-label="Restore" className="flex w-[33px] items-center justify-center border-r border-[#bbb] bg-[linear-gradient(180deg,#a8a8a8_0%,#909090_45%,#606060_50%,#909090_100%)]">
                    <svg viewBox="0 0 16 16" className="h-4 w-4" fill="none" stroke="#fff" strokeWidth="2"><path d="M4 3V1H15V11H13" /><path d="M2 4H12V14H2Z" /><path d="M6 8H8V10H6Z" strokeWidth="1" stroke="#444" /></svg>
                </button>
                <button type="button" aria-label="Close" className="flex w-[59px] items-center justify-center bg-[linear-gradient(180deg,#e0a090_0%,#d07060_45%,#b83010_50%,#d86848_100%)]">
                    <svg viewBox="0 0 16 16" className="h-4 w-4" stroke="#fff" strokeWidth="4"><path d="M3 3L13 13M13 3L3 13" /></svg>
                </button>
            </div>
        </header>
        <nav className="flex h-[25px] shrink-0 items-center gap-2 border-b border-[#999] bg-[linear-gradient(180deg,#fff_0%,#eef1fa_35%,#d5dcef_36%,#dde3f3_100%)] pt-px pl-1 font-['Noto_Sans',sans-serif] text-[14px]">
            {menus.map(([pre, key, post]) => (
                <button key={pre + key + post} type="button">{pre}<span className="underline underline-offset-2">{key}</span>{post}</button>
            ))}
        </nav>
        <div className="flex h-[27px] shrink-0 items-center border-b border-[#777]">
            {toolbar.map((item, i) => item === '|'
                ? <div key={i} className="mx-[2px] h-[22px] w-[2px] border-l border-r border-l-gray-400 border-r-white" />
                : <ToolButton key={i} name={item.replace('*', '')} pressed={item.startsWith('*')} />)}
        </div>
        <div className="mt-px flex min-h-0 flex-1 border-t border-[#666]">
            <ModelTree />
            <div className="flex min-w-0 flex-1 flex-col">
                <div className="flex min-h-0 flex-1">
                    <VerticalTools items={plotTools} />
                    <VerticalTools items={cameraTools} />
                    <PlotArea />
                </div>
                <div className="flex h-[44px] shrink-0 border-t border-l border-[#777]">
                    <pre className="flex-1 pt-px pl-[6px] font-['Liberation_Mono',monospace] text-[12px] leading-[14px]">{'Solution time: 30.11 s\nNumber of degrees of freedom solved for: 41317\nSolution time: 26.204 s'}</pre>
                    <div className="mr-1 flex w-[19px] flex-col items-center justify-between bg-[#f6f6f6] py-[7px]">
                        <Arrow dir="up" />
                        <Arrow dir="down" />
                    </div>
                </div>
            </div>
        </div>
        <footer className="mt-[3px] flex h-[20px] shrink-0 gap-1 leading-[20px]">
            <div className="w-[256px] border-t border-l border-[#888] pl-[2px]">(-0.154, -0.618, 0.144)</div>
            {['AXIS', 'GRID', 'EQUAL', 'CSYS'].map((cell) => (
                <div key={cell} className="border-t border-r border-l border-[#888] border-r-white px-px">{cell}</div>
            ))}
            <div className="ml-auto border-t border-l border-[#888] px-[2px]">Memory: (353 / 794)</div>
        </footer>
    </div>
);

export default App;
